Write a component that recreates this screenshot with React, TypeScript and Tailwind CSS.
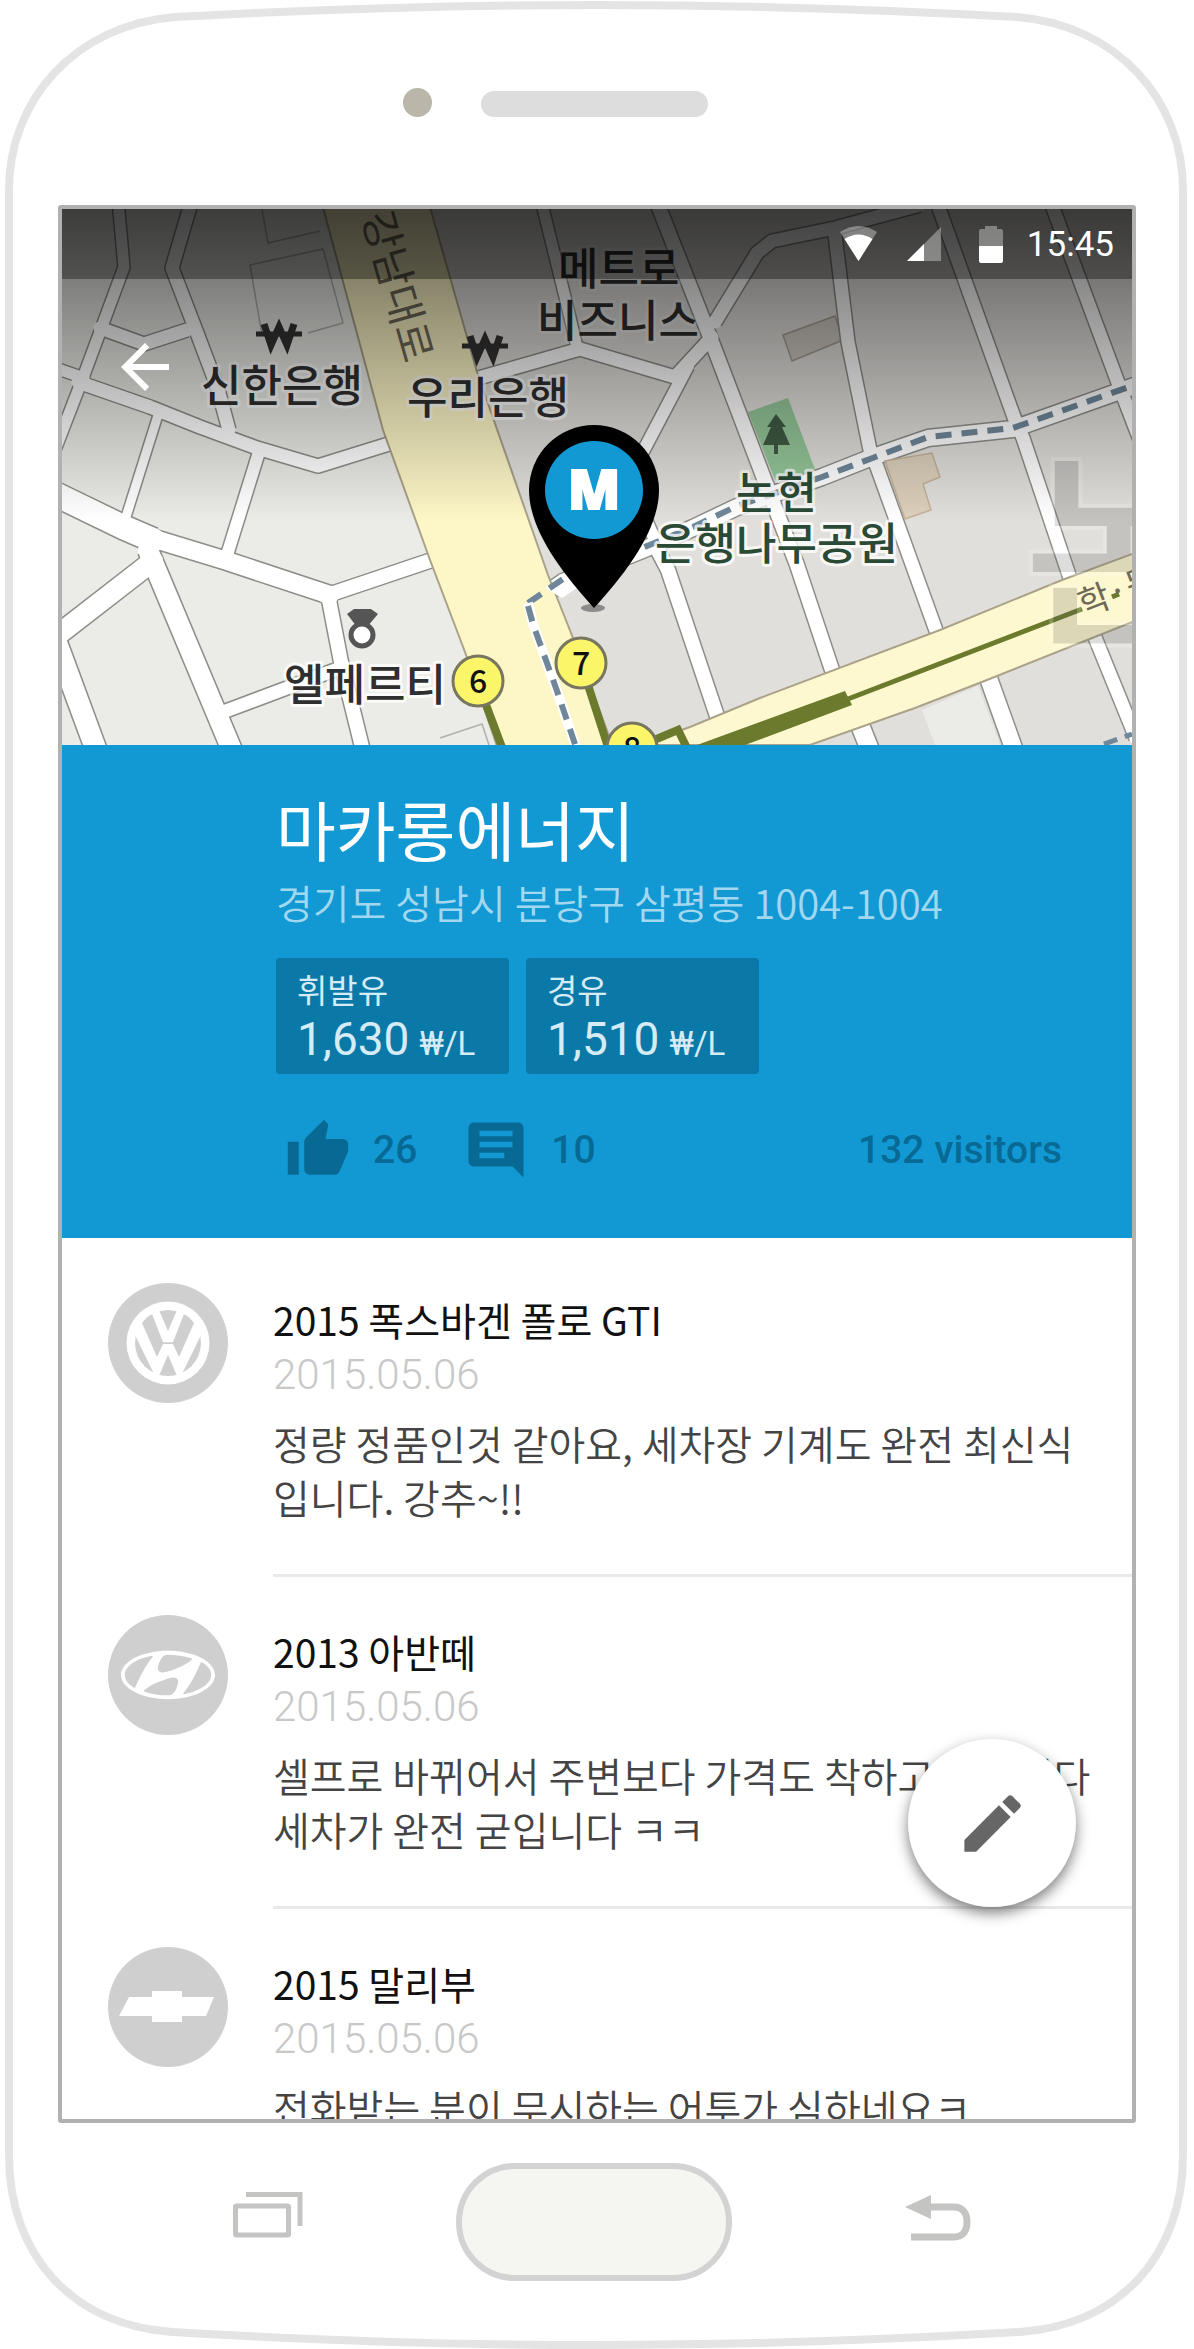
import React from "react";
import { MdArrowBack, MdEdit, MdThumbUp } from "react-icons/md";
import { SiHyundai } from "react-icons/si";

type Road = { d: string; w: number };

const roads: Road[] = [
  { d: "M118 200 L124 267 L84 375 L55 450", w: 11 },
  { d: "M84 378 L55 368", w: 11 },
  { d: "M192 200 L172 268 L197 333 L217 386 L229 430", w: 13 },
  { d: "M100 328 L144 344 L187 330", w: 13 },
  { d: "M78 382 L150 407 L200 427 L257 448 L318 466 L392 443", w: 13 },
  { d: "M159 412 L125 520", w: 9 },
  { d: "M259 452 L227 555", w: 12 },
  { d: "M55 494 L125 528 L153 540", w: 24 },
  { d: "M145 536 L227 561 L330 595", w: 18 },
  { d: "M325 596 L432 560", w: 14 },
  { d: "M153 561 L50 641", w: 20 },
  { d: "M50 625 L98 755", w: 21 },
  { d: "M148 550 L234 755", w: 20 },
  { d: "M223 712 L335 670", w: 13 },
  { d: "M329 600 L341 662 L364 755", w: 14 },
  { d: "M541 200 L567 305 L577 347", w: 11 },
  { d: "M475 379 L580 349 L675 377 L712 337", w: 13 },
  { d: "M656 200 L710 337 L797 565 L834 676", w: 14 },
  { d: "M715 322 L757 253 L772 241 L835 228 L920 205", w: 13 },
  { d: "M688 366 L628 480 L655 540", w: 12 },
  { d: "M655 545 L668 570 L719 722", w: 14 },
  { d: "M835 235 L848 342 L870 450 L877 467 L938 636", w: 13 },
  { d: "M936 200 L1014 417 L1023 438 L1072 584", w: 13 },
  { d: "M1050 200 L1120 388 L1140 440", w: 13 },
  { d: "M528 606 L563 582 L647 548 L693 528 L737 507 L822 477 L870 458 L928 438 L1013 429 L1140 384", w: 16 },
  { d: "M987 674 L1016 755", w: 17 },
  { d: "M1092 630 L1136 738", w: 13 },
  { d: "M858 720 L872 755", w: 18 },
];

const reviews = [
  {
    brand: "Volkswagen",
    logo: <VolkswagenMark />,
    title: "2015 폭스바겐 폴로 GTI",
    date: "2015.05.06",
    body: "정량 정품인것 같아요, 세차장 기계도 완전 최신식입니다. 강추~!!",
  },
  {
    brand: "Hyundai",
    logo: <SiHyundai className="size-[94px]" />,
    title: "2013 아반떼",
    date: "2015.05.06",
    body: "셀프로 바뀌어서 주변보다 가격도 착하고 좋습니다 세차가 완전 굳입니다 ㅋㅋ",
  },
  {
    brand: "Chevrolet",
    logo: <ChevroletMark />,
    title: "2015 말리부",
    date: "2015.05.06",
    body: "전화받는 분이 무시하는 어투가 심하네요ㅋ",
  },
];

const prices = [
  { label: "휘발유", value: "1,630" },
  { label: "경유", value: "1,510" },
];

function VolkswagenMark() {
  return (
    <svg viewBox="-42 -42 84 84" className="size-[84px]">
      <circle r="41.5" fill="#fff" />
      <circle r="33" fill="#cfcfcf" />
      <path
        fill="#fff"
        d="M-16-29-9-33 0-11.7 9-33 16-29 5-.7H-5ZM-33-8-26.5-21-11 14-5 .9H5L11 14 26.5-21 33-8 14 31 9 33 0 11.7-9 33-14 31Z"
      />
    </svg>
  );
}

function ChevroletMark() {
  return (
    <svg viewBox="-50 -20 100 40" className="w-[100px] h-10">
      <path
        fill="#fff"
        d="M-39-10H-16V-16H14V-10H46L38 9H14V15H-16V9H-49Z"
      />
    </svg>
  );
}

// Won sign used as the bank marker
const BankMark = ({ x, y }: { x: number; y: number }) => (
  <g transform={`translate(${x} ${y})`} fill="none" stroke="#333">
    <path d="M8 0 L15 21 L23 3 L31 21 L38 0" strokeWidth="7" />
    <path d="M0 10 H46" strokeWidth="5" />
  </g>
);

const Exit = ({ x, y, n }: { x: number; y: number; n: string }) => (
  <g>
    <circle cx={x} cy={y} r="25" fill="#fbf569" stroke="#77775f" strokeWidth="3" />
    <text
      x={x}
      y={y + 12}
      textAnchor="middle"
      fill="#111"
      className="font-['Noto_Sans_CJK_KR',sans-serif] text-[32px] font-medium"
    >
      {n}
    </text>
  </g>
);

const StationMap = () => (
  <svg
    viewBox="62 209 1070 536"
    preserveAspectRatio="xMidYMid slice"
    role="img"
    aria-label="지도"
    className="block w-full font-['Noto_Sans_CJK_KR',sans-serif]"
  >
    {/* Blocks */}
    <rect x="62" y="209" width="1070" height="536" fill="#ebebe7" />
    <path d="M430 209 L477 372 L548 575 L612 745 H1132 V209 Z" fill="#e1dfdb" />
    <path d="M922 710 L978 686 L1000 745 H935 Z" fill="#ebebe8" />
    <g fill="none" stroke="#b0b0ac" strokeWidth="1.5">
      <path d="M262 209 L268 243 L320 231 M262 335 L250 265 L323 249 L343 323 L308 333" />
      <path d="M440 738 L482 724 L489 745" />
    </g>
    <path d="M783 335 L835 316 L843 340 L792 361 Z" fill="#cdc8c0" stroke="#a59c92" strokeWidth="1.5" />
    <path d="M748 412 L788 398 L816 472 L797 492 L775 480 Z" fill="#94c698" />

    {/* Roads */}
    <g fill="none" stroke="#8d8d89" strokeLinejoin="round">
      {roads.map((r) => (
        <path key={r.d} d={r.d} strokeWidth={r.w + 3} />
      ))}
    </g>
    <g fill="none" stroke="#fff" strokeLinejoin="round" strokeLinecap="round">
      {roads.map((r) => (
        <path key={r.d} d={r.d} strokeWidth={r.w} />
      ))}
    </g>
    <path d="M885 461 L932 453 L940 477 L923 484 L931 510 L905 519 Z" fill="#dccfbb" stroke="#c4b299" strokeWidth="1.5" />
    <path
      d="M640 745 L690 727 L760 698 L940 630 L1062 580 L1140 551 V619 L987 680 L915 708 L810 745 Z"
      fill="#fdf8cf"
      stroke="#aaa289"
      strokeWidth="2"
    />
    <path
      d="M321 200 L383 430 L430 560 L465 652 L500 755 H616 L573 638 L548 575 L477 372 L428 200 Z"
      fill="#fdf6c6"
      stroke="#aaa289"
      strokeWidth="2"
    />
    <path d="M545 588 L566 578 L580 586 L562 598 Z" fill="#fff" />
    <path
      d="M528 603 L563 579 L647 546 L693 527 L737 506 L822 477 L870 459 L928 437 L1013 428 L1140 383"
      fill="none"
      stroke="#6f8799"
      strokeWidth="6"
      strokeDasharray="16 10"
    />
    <path d="M528 603 L533 624 L557 691 L577 750" fill="none" stroke="#fff" strokeWidth="10" />
    <path d="M528 606 L533 624 L557 691 L577 750" fill="none" stroke="#6f8799" strokeWidth="6" strokeDasharray="16 10" />
    <path d="M1104 744 L1132 734" stroke="#6f8799" strokeWidth="5" strokeDasharray="14 8" />

    {/* Subway line */}
    <g fill="none" stroke="#6b7a2c">
      <path d="M848 699 L1082 609" strokeWidth="5" />
      <path d="M1112 597 L1119 594" strokeWidth="5" />
      <path d="M640 746 L678 730 L688 750" strokeWidth="8" />
      <path d="M485 702 L503 750 M588 685 L609 750" strokeWidth="8" />
    </g>
    <path d="M697 745 L845 691 L852 705 L745 745 Z" fill="#6b7a2c" />

    {/* Area name */}
    <text
      x="1022"
      y="630"
      fill="#5a5a5a"
      stroke="#fff"
      strokeWidth="4"
      opacity="0.2"
      className="text-[210px] font-bold"
    >
      논
    </text>

    {/* Labels */}
    <g fill="#6f6a58" className="text-[42px]">
      <text transform="translate(362 216) rotate(74)">강남대로</text>
      <text transform="translate(1084 617) rotate(-21)" className="text-[34px]">학·동</text>
    </g>
    <g
      fill="#2f2f2f"
      stroke="#ffffff"
      strokeOpacity="0.75"
      strokeWidth="6"
      strokeLinejoin="round"
      paintOrder="stroke"
      className="text-[44px] font-medium"
    >
      <text x="201" y="402">신한은행</text>
      <text x="407" y="414">우리은행</text>
      <text x="558" y="285" strokeOpacity="0.3">메트로</text>
      <text x="537" y="337" strokeOpacity="0.3">비즈니스</text>
      <text x="284" y="701">엘페르티</text>
      <text x="736" y="509" fill="#2b4a36">논현</text>
      <text x="655" y="560" fill="#2b4a36">은행나무공원</text>
    </g>
    <BankMark x={256} y={324} />
    <BankMark x={462} y={336} />
    <path d="M347 614 L354 609 H371 L378 614 L367 627 H357 Z" fill="#555" />
    <circle cx="362" cy="635" r="11" fill="#fff" stroke="#555" strokeWidth="5" />
    <path d="M776 414 L786 427 H782 L790 445 H778 V454 H774 V445 H763 L771 427 H767 Z" fill="#3f5a44" />
    <Exit x={478} y={681} n="6" />
    <Exit x={581} y={663} n="7" />
    <Exit x={632} y={748} n="8" />
  </svg>
);

const StationPin = () => (
  <svg viewBox="0 0 130 188" className="block w-full">
    <ellipse cx="64" cy="183" rx="12" ry="4" fill="#8c8c8c" />
    <path d="M65 183 C32 147 0 104 0 65 A65 65 0 0 1 130 65 C130 104 98 147 65 183 Z" fill="#000" />
    <circle cx="65" cy="65" r="49" fill="#1299d4" />
    <text
      x="65"
      y="84"
      textAnchor="middle"
      fill="#fff"
      stroke="#fff"
      strokeWidth="2"
      className="font-['Noto_Sans',sans-serif] text-[54px] font-black"
    >
      M
    </text>
  </svg>
);

const StatusBar = () => (
  <div className="flex h-[70px] items-center justify-end bg-black/35 pr-[18px] text-white">
    <svg viewBox="0 0 37 36" className="mr-[30px] h-9 w-[37px]">
      <path d="M0 6 Q18.500 -6 37 6 L18.500 35 Z" fill="#fff" fillOpacity="0.35" />
      <path d="M4.500 13 Q18.500 4 32.500 13 L18.500 35 Z" fill="#fff" />
    </svg>
    <svg viewBox="0 0 34 34" className="mr-[38px] size-[34px]">
      <path d="M0 34 H34 V0 Z" fill="#fff" fillOpacity="0.35" />
      <path d="M0 34 H17 V17 Z" fill="#fff" />
    </svg>
    <svg viewBox="0 0 24 37" className="mr-6 h-[37px] w-6">
      <path d="M0 20 V5 Q0 3 2 3 H6 V0 H18 V3 H22 Q24 3 24 5 V20 Z" fill="#fff" fillOpacity="0.35" />
      <path d="M0 20 H24 V35 Q24 37 22 37 H2 Q0 37 0 35 Z" fill="#fff" />
    </svg>
    <span className="font-['Roboto',sans-serif] text-[35px] leading-none">15:45</span>
  </div>
);

const StationInfo = () => (
  <section className="bg-[#1299d4] pb-[55px] pl-[214px] pr-[70px] pt-[45px]">
    <h1 className="text-[65px] leading-[76px] text-white">마카롱에너지</h1>
    <p className="mt-[9px] text-[40px] font-[350] leading-[54px] text-[#a2d8ef]">
      경기도 성남시 분당구 삼평동 1004-1004
    </p>
    <div className="mt-[29px] flex gap-[17px]">
      {prices.map((p) => (
        <div
          key={p.label}
          className="flex h-[116px] w-[233px] flex-col rounded-sm bg-[#0b79a8] pl-[21px] pt-2 text-[#d5ebf6]"
        >
          <span className="text-[33px] leading-[46px]">{p.label}</span>
          <span className="flex items-baseline gap-[10px] font-['Roboto',sans-serif] leading-[54px]">
            <span className="text-[46px]">{p.value}</span>
            <span className="text-[33px]">₩/L</span>
          </span>
        </div>
      ))}
    </div>
    <div className="mt-[43px] flex h-[66px] items-center font-['Roboto',sans-serif] text-[39px] font-medium text-[#086a94]">
      <button type="button" aria-label="좋아요" className="ml-[9px] flex items-center gap-[22px]">
        <MdThumbUp className="size-[66px]" />
        26
      </button>
      <button type="button" aria-label="댓글" className="ml-[46px] flex items-center gap-[22px]">
        <svg viewBox="0 0 24 24" className="size-[66px]" fill="currentColor">
          <path d="M22 4c0-1.100-.9-2-2-2H4c-1.100 0-2 .9-2 2v12c0 1.100.9 2 2 2h14l4 4zM18 7H6V5h12zM18 11H6V9h12zM15 15H6v-2h9z" />
        </svg>
        10
      </button>
      <span className="ml-auto">132 visitors</span>
    </div>
  </section>
);

const ReviewList = () => (
  <ul className="bg-white pt-[7px]">
    {reviews.map((r) => (
      <li key={r.title} className="flex gap-[45px] pl-[46px]">
        <div
          role="img"
          aria-label={r.brand}
          className="mt-[38px] flex size-[120px] shrink-0 items-center justify-center rounded-full bg-[#cfcfcf] text-white"
        >
          {r.logo}
        </div>
        <div className="flex-1 border-b-[3px] border-[#e9e9e9] pb-[50px] pr-[38px] pt-[47px]">
          <h2 className="text-[39px] leading-[54px] text-[#111]">{r.title}</h2>
          <time className="mt-0.5 block font-['Roboto',sans-serif] text-[42px] font-light leading-[54px] text-[#c8c8c8]">
            {r.date}
          </time>
          <p className="mt-3.5 text-[40px] font-[350] leading-[54px] text-[#444]">{r.body}</p>
        </div>
      </li>
    ))}
  </ul>
);

const App = () => {
  return (
    <div className="relative bg-white pr-[6px] font-['Noto_Sans_CJK_KR',sans-serif]">
      {/* Phone body */}
      <svg
        viewBox="0 0 1194 2349"
        preserveAspectRatio="none"
        aria-hidden="true"
        className="pointer-events-none absolute inset-0 size-full"
      >
        <path
          d="M9 2155 V190 C9 100 75 25 175 17 Q400 5 597 5 Q794 5 1017 17 C1117 25 1183 100 1183 190 V2155 C1183 2255 1120 2325 1020 2332 Q800 2345 597 2345 Q390 2345 172 2332 C72 2325 9 2255 9 2155 Z"
          fill="#fff"
          stroke="#e4e4e4"
          strokeWidth="8"
        />
      </svg>

      {/* Camera & speaker */}
      <div className="relative grid h-[205px] grid-cols-[1fr_227px_1fr] items-start pt-[88px]">
        <span className="mr-[49px] size-[29px] justify-self-end rounded-full bg-[#bab6a9]" />
        <span className="mt-[3px] h-[26px] rounded-full bg-[#dddddd]" />
      </div>

      {/* Screen */}
      <main className="relative ml-[58px] mr-[52px] aspect-[1078/1918] overflow-hidden rounded-[3px] border-4 border-[#b1b1b1] bg-white">
        <div className="relative">
          <StationMap />
          <div className="absolute inset-x-0 top-0 h-[312px] bg-linear-to-b from-black/60 to-black/0">
            <StatusBar />
            <button type="button" aria-label="뒤로" className="ml-[47px] mt-[52px] block text-white">
              <MdArrowBack className="size-[72px]" />
            </button>
          </div>
          <div className="absolute left-[467px] top-[216px] w-[130px]">
            <StationPin />
          </div>
        </div>
        <StationInfo />
        <ReviewList />
        <button
          type="button"
          aria-label="글쓰기"
          className="absolute bottom-[212px] right-14 flex size-[168px] items-center justify-center rounded-full bg-white text-[#666] shadow-[0_6px_14px_rgba(0,0,0,0.5)]"
        >
          <MdEdit className="size-[75px]" />
        </button>
      </main>

      {/* Hardware keys */}
      <div className="relative grid grid-cols-[1fr_276px_1fr] items-center pb-[68px] pt-10">
        <button type="button" aria-label="최근 앱" className="mr-[153px] justify-self-end">
          <svg viewBox="0 0 70 46" className="mb-3.5 h-[46px] w-[70px]" fill="none" stroke="#c4c4c3" strokeWidth="5">
            <rect x="2.500" y="14" width="53" height="29" rx="1" />
            <path d="M13 2.500 H67 V34" />
          </svg>
        </button>
        <button
          type="button"
          aria-label="홈"
          className="h-[118px] rounded-full border-[6px] border-[#d3d3d3] bg-[#f5f6f1]"
        />
        <button type="button" aria-label="뒤로 가기" className="ml-[172px] justify-self-start">
          <svg viewBox="0 0 68 46" className="mb-2 h-[46px] w-[68px]" fill="none" stroke="#c4c4c3" strokeWidth="7">
            <path d="M26 12 H50 C59 12 63 19 63 27 C63 36 59 42 50 42 H7" />
            <path d="M1 12 L27 0 V24 Z" fill="#c4c4c3" stroke="none" />
          </svg>
        </button>
      </div>
    </div>
  );
};

export default App;
